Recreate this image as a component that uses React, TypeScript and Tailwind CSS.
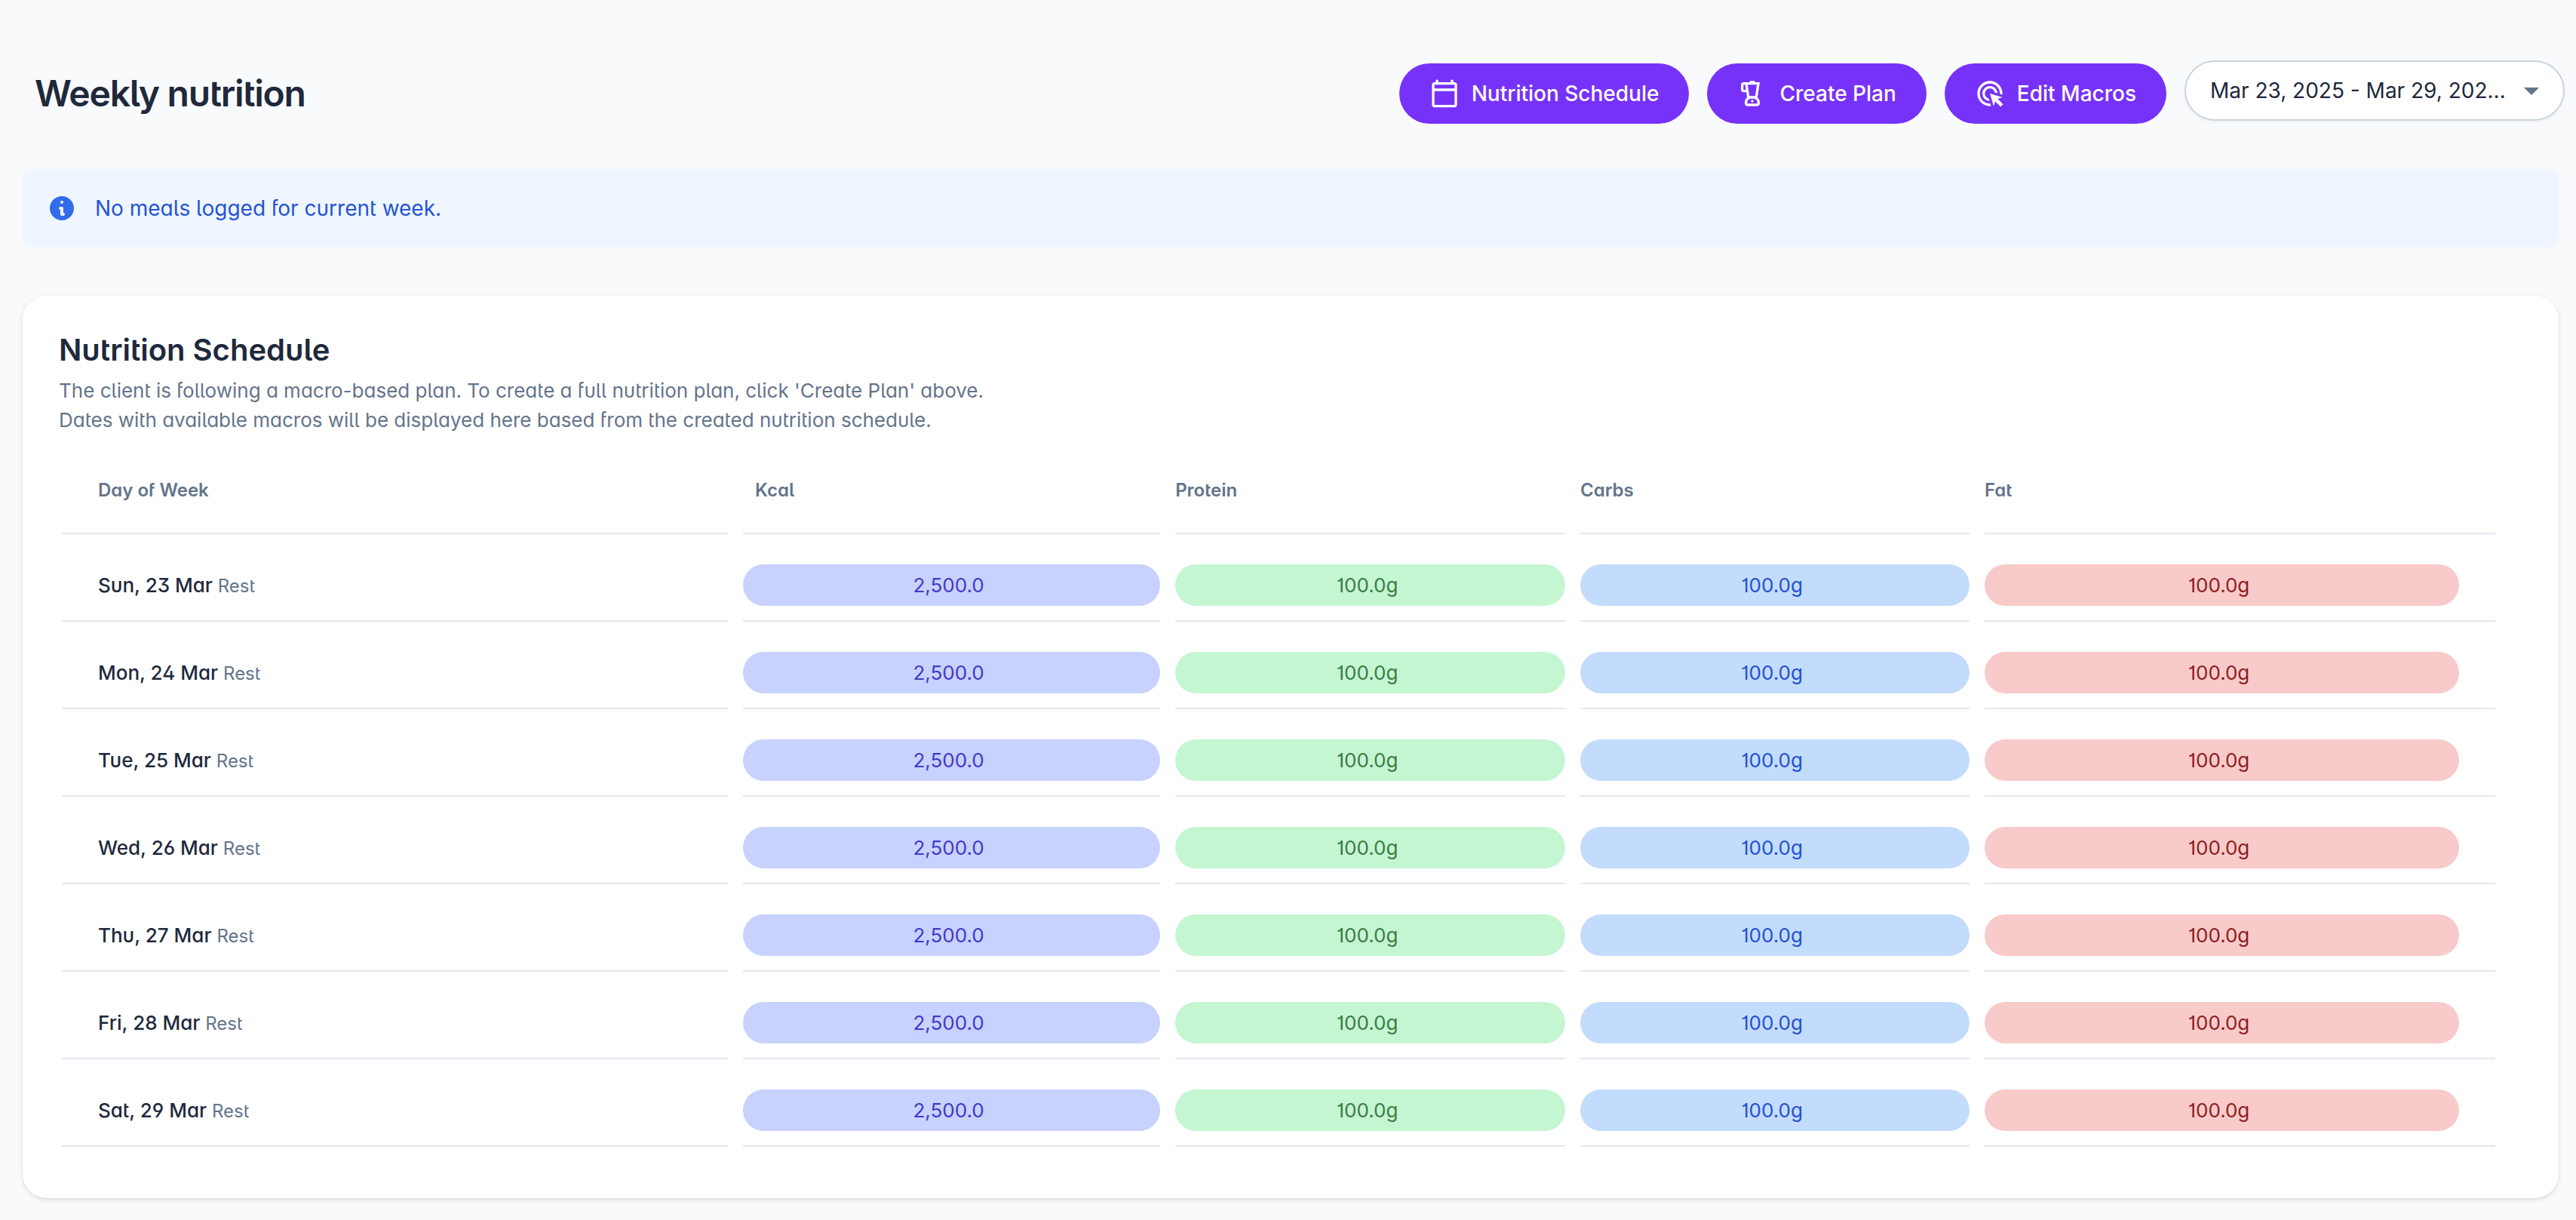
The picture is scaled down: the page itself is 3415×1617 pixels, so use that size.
import type { ReactNode } from 'react';
import { HiInformationCircle } from 'react-icons/hi';
import { MdAdsClick, MdArrowDropDown, MdOutlineBlender, MdOutlineCalendarToday } from 'react-icons/md';

const days = [
  { date: 'Sun, 23 Mar', type: 'Rest' },
  { date: 'Mon, 24 Mar', type: 'Rest' },
  { date: 'Tue, 25 Mar', type: 'Rest' },
  { date: 'Wed, 26 Mar', type: 'Rest' },
  { date: 'Thu, 27 Mar', type: 'Rest' },
  { date: 'Fri, 28 Mar', type: 'Rest' },
  { date: 'Sat, 29 Mar', type: 'Rest' },
];

const macros = [
  { key: 'kcal', value: '2,500.0', pill: 'bg-[#c7d2fe] text-[#4338ca]', cell: '' },
  { key: 'protein', value: '100.0g', pill: 'bg-[#c4f6d2] text-[#3a7d44]', cell: '' },
  { key: 'carbs', value: '100.0g', pill: 'bg-[#c3dcfd] text-[#2450d3]', cell: '' },
  { key: 'fat', value: '100.0g', pill: 'bg-[#f8caca] text-[#8f1d1d]', cell: 'pr-12' },
];

const columns = [
  { label: 'Day of Week', width: 'w-[28.07%]', pad: 'px-12' },
  { label: 'Kcal', width: 'w-[17.58%]', pad: 'px-4' },
  { label: 'Protein', width: 'w-[16.43%]', pad: '' },
  { label: 'Carbs', width: 'w-[16.4%]', pad: '' },
  { label: 'Fat', width: 'w-[21.52%]', pad: 'pr-12' },
];

function ActionButton({ icon, children }: { icon: ReactNode; children: ReactNode }) {
  return (
    <button
      type="button"
      className="mt-1 flex h-20 items-center gap-4 rounded-full bg-[#7732f9] px-10 text-[28px] font-medium whitespace-nowrap text-white"
    >
      {icon}
      {children}
    </button>
  );
}

function PageHeader() {
  return (
    <header className="-mr-2 flex items-start justify-between pl-4">
      <h1 className="mt-2 text-[48px] leading-[72px] font-semibold tracking-tight text-[#1e293b]">Weekly nutrition</h1>
      <div className="flex items-start gap-6 [font-feature-settings:normal]">
        <ActionButton icon={<MdOutlineCalendarToday className="size-10" />}>Nutrition Schedule</ActionButton>
        <ActionButton icon={<MdOutlineBlender className="size-10" />}>Create Plan</ActionButton>
        <ActionButton icon={<MdAdsClick className="size-10" />}>Edit Macros</ActionButton>
        <div className="relative">
          <select
            aria-label="Week"
            className="h-20 w-[504px] appearance-none rounded-full border-2 border-[#cbd5e1] bg-white pr-16 pl-8 text-[28px] text-[#1e293b] shadow-[0_2px_4px_rgba(0,0,0,0.05)]"
          >
            <option>Mar 23, 2025 - Mar 29, 202…</option>
          </select>
          <MdArrowDropDown className="pointer-events-none absolute top-4 right-5 size-12 text-[#64748b]" />
        </div>
      </div>
    </header>
  );
}

function ScheduleTable() {
  return (
    <table className="w-full table-fixed border-separate border-spacing-x-5 border-spacing-y-0 text-left">
      <thead>
        <tr>
          {columns.map((col) => (
            <th
              key={col.label}
              scope="col"
              className={`border-b-2 border-[#e2e8f0] pt-10 pb-[38px] text-2xl leading-9 font-semibold text-[#64748b] ${col.width} ${col.pad}`}
            >
              {col.label}
            </th>
          ))}
        </tr>
      </thead>
      <tbody>
        {days.map((day) => (
          <tr key={day.date}>
            <td className="border-b-2 border-[#e2e8f0] px-12 pt-10 pb-[19px] text-[26px] leading-[39px] font-medium text-[#1e293b]">
              {day.date} <span className="text-2xl font-normal text-[#64748b]">{day.type}</span>
            </td>
            {macros.map((macro) => (
              <td key={macro.key} className={`border-b-2 border-[#e2e8f0] pt-10 pb-[19px] ${macro.cell}`}>
                <div className={`rounded-full py-2 pr-2 text-center text-[26px] leading-[39px] ${macro.pill}`}>
                  {macro.value}
                </div>
              </td>
            ))}
          </tr>
        ))}
      </tbody>
    </table>
  );
}

export default function App() {
  return (
    <main className="min-h-screen bg-[#f9fafc] pt-20 pr-[23px] pb-7 pl-[30px] font-['Inter',sans-serif] [font-feature-settings:'salt','cv11']">
      <PageHeader />

      <div role="alert" className="mt-[60px] flex h-[104px] items-center gap-6 rounded-xl bg-[#eff6ff] px-8">
        <HiInformationCircle className="size-10 text-[#326cea]" />
        <p className="text-[28px] leading-10 text-[#2553d6]">No meals logged for current week.</p>
      </div>

      <section className="mt-16 rounded-[32px] bg-white pt-12 pb-[68px] shadow-[0_2px_6px_rgba(0,0,0,0.1),0_2px_4px_-2px_rgba(0,0,0,0.1)]">
        <div className="px-12">
          <h2 className="text-[40px] leading-[48px] font-semibold text-[#1e293b]">Nutrition Schedule</h2>
          <p className="mt-[10px] text-[26px] leading-[39px] text-[#64748b]">
            The client is following a macro-based plan. To create a full nutrition plan, click 'Create Plan' above.
            <br />
            Dates with available macros will be displayed here based from the created nutrition schedule.
          </p>
        </div>
        <div className="mt-4 pr-16 pl-8">
          <ScheduleTable />
        </div>
      </section>
    </main>
  );
}
